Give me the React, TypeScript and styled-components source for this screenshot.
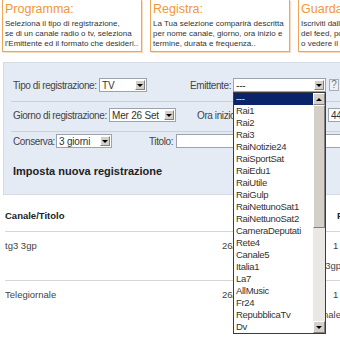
import React from 'react'
import styled, { createGlobalStyle } from 'styled-components'

const GlobalStyle = createGlobalStyle`
  body {
    margin: 0;
    background: #fff;
    overflow: hidden;
    font-family: "Liberation Sans", Arial, sans-serif;
  }
`

const infoBoxes = [
  {
    title: 'Programma:',
    lines: [
      'Seleziona il tipo di registrazione,',
      'se di un canale radio o tv, seleziona',
      "l'Emittente ed il formato che desideri..",
    ],
  },
  {
    title: 'Registra:',
    lines: [
      'La Tua selezione comparirà descritta',
      'per nome canale, giorno, ora inizio e',
      'termine, durata e frequenza..',
    ],
  },
  {
    title: 'Guarda:',
    lines: [
      'Iscriviti dalla lista dei programmi',
      'del feed, potrai scaricarli',
      'o vedere il tuo programma..',
    ],
  },
]

const channels = [
  '---',
  'Rai1',
  'Rai2',
  'Rai3',
  'RaiNotizie24',
  'RaiSportSat',
  'RaiEdu1',
  'RaiUtile',
  'RaiGulp',
  'RaiNettunoSat1',
  'RaiNettunoSat2',
  'CameraDeputati',
  'Rete4',
  'Canale5',
  'Italia1',
  'La7',
  'AllMusic',
  'Fr24',
  'RepubblicaTv',
  'Dv',
]

const recordings = [
  { title: 'tg3 3gp', date: '26/09/2007 19:00', freq: '1 volta', note: 'tg3 3gp' },
  { title: 'Telegiornale', date: '26/09/2007 20:00', freq: '1 volta', note: 'Telegiornale' },
]

type SelectProps = {
  value: string
  width: number
}

const Select: React.FC<SelectProps> = ({ value, width }) => (
  <SelectBox $w={width}>
    <SelectValue>{value}</SelectValue>
    <ArrowButton>
      <Triangle />
    </ArrowButton>
  </SelectBox>
)

const App: React.FC = () => (
  <Page>
    <GlobalStyle />
    <TopRow>
      {infoBoxes.map((box) => (
        <InfoBox key={box.title}>
          <InfoTitle>{box.title}</InfoTitle>
          {box.lines.map((line) => (
            <InfoText key={line}>{line}</InfoText>
          ))}
        </InfoBox>
      ))}
    </TopRow>

    <Panel>
      <Row $pt={15}>
        <Group $w={177}>
          <Label $w={83}>Tipo di registrazione:</Label>
          <Select value="TV" width={48} />
        </Group>
        <Group>
          <Label $w={40}>Emittente:</Label>
          <SelectWrap>
            <Select value="---" width={93} />
            <DropList>
              <Items>
                {channels.map((name, i) => (
                  <Item key={name} $active={i === 0}>
                    {name}
                  </Item>
                ))}
              </Items>
              <ScrollBar>
                <ScrollButton>
                  <UpTriangle />
                </ScrollButton>
                <Thumb />
                <Track />
                <ScrollButton>
                  <Triangle />
                </ScrollButton>
              </ScrollBar>
            </DropList>
          </SelectWrap>
          <HelpButton>?</HelpButton>
        </Group>
      </Row>

      <Row $pt={6}>
        <Group $w={184}>
          <Label $w={93}>Giorno di registrazione:</Label>
          <Select value="Mer 26 Set" width={67} />
        </Group>
        <Group>
          <Label $w={44}>Ora inizio:</Label>
          <Select value="19" width={78} />
          <Spacer />
          <Select value="44" width={30} />
        </Group>
      </Row>

      <Row $pt={2} $last>
        <Group $w={136}>
          <Label $w={40}>Conserva:</Label>
          <Select value="3 giorni" width={56} />
        </Group>
        <Group>
          <Label $w={24}>Titolo:</Label>
          <TextInput />
        </Group>
      </Row>

      <Heading>Imposta nuova registrazione</Heading>
    </Panel>

    <Table>
      <HeadRow>
        <span>Canale/Titolo</span>
        <HeadCell $pl={14}>Data/Ora</HeadCell>
        <HeadCell $pl={5}>Frequenza</HeadCell>
      </HeadRow>
      {recordings.map((rec, i) => (
        <DataRow key={rec.title} $last={i === recordings.length - 1}>
          <span>{rec.title}</span>
          <span>{rec.date}</span>
          <FreqCell>{rec.freq}</FreqCell>
          <Note>{rec.note}</Note>
        </DataRow>
      ))}
    </Table>
  </Page>
)

const Page = styled.div`
  width: 420px;
`

const TopRow = styled.div`
  display: flex;
  gap: 8px;
  padding-left: 2px;
`

const InfoBox = styled.div`
  width: 140px;
  flex: none;
  box-sizing: border-box;
  padding: 2px 3px 2px 2px;
  border: 1px solid #f0a458;
  border-top: none;
  box-shadow: 1px 1px 0 #fbdcbc;
  overflow: hidden;
`

const InfoTitle = styled.div`
  font-size: 12.5px;
  line-height: 14px;
  color: #f2963a;
  margin-bottom: 3px;
`

const InfoText = styled.div`
  font-size: 8px;
  line-height: 10px;
  color: #333;
  white-space: nowrap;
`

const Panel = styled.div`
  margin: 10px 0 0 3px;
  padding: 0 0 16px 7px;
  background: #e5ebf5;
  border: 1px solid #d3dbe7;
`

const Row = styled.div<{ $pt: number; $last?: boolean }>`
  display: flex;
  align-items: center;
  padding: ${(p) => p.$pt}px 0 ${(p) => (p.$last ? 0 : 9)}px 2px;
  border-bottom: ${(p) => (p.$last ? 'none' : '1px solid #c9d0da')};
`

const Group = styled.div<{ $w?: number }>`
  display: flex;
  align-items: center;
  gap: 3px;
  flex: none;
  width: ${(p) => (p.$w ? `${p.$w}px` : 'auto')};
`

const Label = styled.span<{ $w: number }>`
  width: ${(p) => p.$w}px;
  flex: none;
  font-size: 10px;
  letter-spacing: -0.4px;
  color: #444;
  white-space: nowrap;
`

const SelectBox = styled.div<{ $w: number }>`
  display: flex;
  align-items: center;
  flex: none;
  width: ${(p) => p.$w}px;
  height: 14px;
  box-sizing: border-box;
  padding: 0 1px 0 2px;
  background: #fff;
  border: 1px solid #9aa3ae;
`

const SelectValue = styled.span`
  font-size: 10px;
  letter-spacing: -0.2px;
  color: #333;
  white-space: nowrap;
`

const ArrowButton = styled.div`
  display: flex;
  align-items: center;
  justify-content: center;
  width: 10px;
  height: 10px;
  margin-left: auto;
  box-sizing: border-box;
  background: #d4d0c8;
  border: 1px solid;
  border-color: #fff #808080 #808080 #fff;
`

const Triangle = styled.span`
  width: 0;
  height: 0;
  border-left: 3px solid transparent;
  border-right: 3px solid transparent;
  border-top: 3px solid #000;
`

const UpTriangle = styled(Triangle)`
  border-top: none;
  border-bottom: 3px solid #000;
`

const SelectWrap = styled.div`
  position: relative;
`

const DropList = styled.div`
  position: absolute;
  top: 14px;
  left: 0;
  z-index: 2;
  display: flex;
  width: 93px;
  height: 242px;
  box-sizing: border-box;
  background: #fff;
  border: 1px solid #3c3c3c;
`

const Items = styled.div`
  flex: 1;
`

const Item = styled.div<{ $active?: boolean }>`
  height: 12px;
  line-height: 12px;
  padding-left: 2px;
  font-size: 9.5px;
  letter-spacing: -0.3px;
  color: ${(p) => (p.$active ? '#fff' : '#333')};
  background: ${(p) => (p.$active ? '#0a246a' : 'transparent')};
  white-space: nowrap;
`

const ScrollBar = styled.div`
  display: flex;
  flex-direction: column;
  width: 12px;
  background: #eae8e4;
`

const ScrollButton = styled.div`
  display: flex;
  align-items: center;
  justify-content: center;
  height: 12px;
  box-sizing: border-box;
  background: #d4d0c8;
  border: 1px solid;
  border-color: #fff #808080 #808080 #fff;
`

const Thumb = styled.div`
  height: 123px;
  box-sizing: border-box;
  background: #d4d0c8;
  border: 1px solid;
  border-color: #fff #808080 #808080 #fff;
`

const Track = styled.div`
  flex: 1;
`

const HelpButton = styled.div`
  width: 10px;
  height: 12px;
  box-sizing: border-box;
  background: #eef0f4;
  border: 1px solid #a7aeb8;
  font-size: 10px;
  line-height: 10px;
  text-align: center;
  color: #777;
`

const Spacer = styled.span`
  width: 0;
`

const TextInput = styled.div`
  width: 200px;
  height: 14px;
  box-sizing: border-box;
  background: #fff;
  border: 1px solid #9aa3ae;
`

const Heading = styled.h2`
  margin: 16px 0 0 2px;
  font-size: 11px;
  line-height: 14px;
  font-weight: bold;
  color: #222;
`

const Table = styled.div`
  width: 336px;
  margin-left: 5px;
  font-size: 9.5px;
  line-height: 12px;
  color: #444;
`

const HeadRow = styled.div`
  display: grid;
  grid-template-columns: 217px 110px minmax(0, 1fr);
  padding: 15px 0 9px;
  border-bottom: 1px solid #d6d6d6;
  font-weight: bold;
  color: #222;
  white-space: nowrap;
`

const HeadCell = styled.span<{ $pl: number }>`
  padding-left: ${(p) => p.$pl}px;
`

const DataRow = styled.div<{ $last?: boolean }>`
  display: grid;
  grid-template-columns: 217px 110px minmax(0, 1fr);
  row-gap: 8px;
  padding: 8px 0 ${(p) => (p.$last ? 20 : 8)}px;
  border-bottom: ${(p) => (p.$last ? 'none' : '1px solid #d6d6d6')};
  white-space: nowrap;
`

const FreqCell = styled.span`
  padding-left: 1px;
`

const Note = styled.span`
  grid-column: 2 / 4;
  text-align: right;
`

export default App
